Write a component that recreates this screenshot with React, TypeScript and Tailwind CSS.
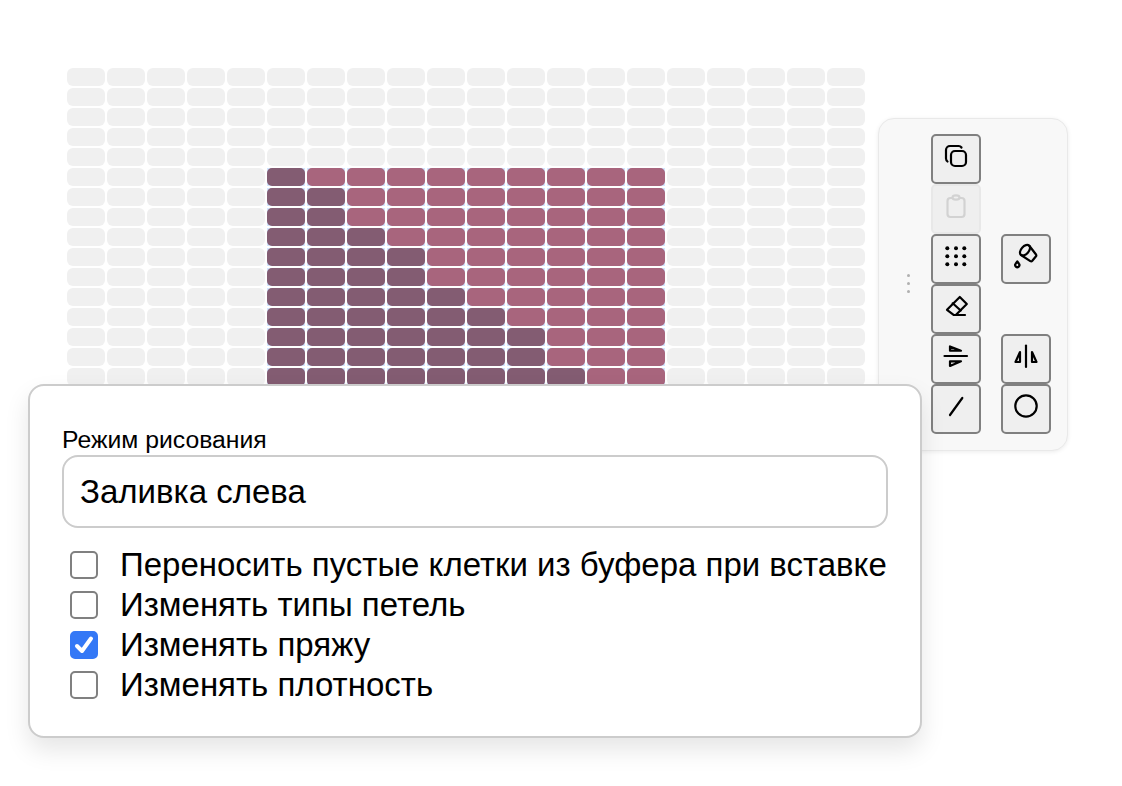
import { type ReactNode } from "react";

const COLS = 20;
const ROWS = 20;
// how many dark cells each row of the selection starts with
const DARK_COUNTS = [1, 2, 2, 3, 4, 4, 5, 6, 7, 7, 8, 8, 9, 10, 10];
const SEL_LEFT = 5;
const SEL_RIGHT = 14;
const SEL_TOP = 5;

function Cell({ col, row }: { col: number; row: number }) {
	const selected = col >= SEL_LEFT && col <= SEL_RIGHT && row >= SEL_TOP;
	if (!selected) {
		return <div className="h-[18px] w-[38px] rounded-[6px] bg-[#f0f0f0]" />;
	}
	const dark = col - SEL_LEFT < (DARK_COUNTS[row - SEL_TOP] ?? 10);
	return (
		<div className="h-[18px] w-[38px] bg-[#d3e6ff]">
			<div
				className={`h-full w-full rounded-[5px] ${dark ? "bg-[#835c72]" : "bg-[#a8657d]"}`}
			/>
		</div>
	);
}

function ToolButton({
	children,
	disabled,
}: {
	children: ReactNode;
	disabled?: boolean;
}) {
	return (
		<button
			type="button"
			disabled={disabled}
			className={`flex h-[50px] w-[50px] items-center justify-center rounded-[5px] border-2 bg-[#efefef] ${
				disabled ? "border-[#e8e8e8] text-[#d2d2d2]" : "border-[#808080] text-black"
			}`}
		>
			{children}
		</button>
	);
}

function Icon({ children }: { children: ReactNode }) {
	return (
		<svg
			viewBox="2 2 46 46"
			className="h-[46px] w-[46px]"
			fill="none"
			stroke="currentColor"
			strokeWidth="2.2"
			strokeLinecap="round"
			strokeLinejoin="round"
		>
			{children}
		</svg>
	);
}

function CheckRow({ label, checked }: { label: string; checked?: boolean }) {
	return (
		<label className="flex h-10 items-center">
			<span
				className={`ml-2 flex h-[28px] w-[28px] shrink-0 items-center justify-center rounded-[5px] border-2 ${
					checked ? "border-[#3478f6] bg-[#3478f6]" : "border-[#808080] bg-white"
				}`}
			>
				{checked && (
					<svg viewBox="0 0 24 24" className="h-[24px] w-[24px]" fill="none">
						<path
							d="M5 13l5 5L19 5.5"
							stroke="white"
							strokeWidth="4"
							strokeLinecap="round"
							strokeLinejoin="round"
						/>
					</svg>
				)}
			</span>
			<span className="ml-[22px] whitespace-nowrap text-[33px] leading-10 text-black">
				{label}
			</span>
		</label>
	);
}

export default function App() {
	return (
		<div className="relative h-[786px] w-[1122px] overflow-hidden bg-white pl-[67px] pt-[68px] font-['Liberation_Sans',Arial,sans-serif]">
			<div className="grid w-max grid-cols-[repeat(20,38px)] gap-[2px]">
				{Array.from({ length: ROWS * COLS }, (_, i) => (
					<Cell key={i} col={i % COLS} row={Math.floor(i / COLS)} />
				))}
			</div>

			{/* floating tool palette */}
			<div className="absolute left-[878px] top-[118px] flex rounded-[16px] border border-[#e9e9e9] bg-[#f8f8f8] pb-4 pl-[27px] pr-4 pt-[15px] shadow-[0_1px_4px_rgba(0,0,0,0.08)]">
				<div className="mr-[21px] flex w-[4px] flex-col items-center justify-center gap-[5px] pb-[2px]">
					<span className="h-[3px] w-[3px] rounded-full bg-[#b0b0b0]" />
					<span className="h-[3px] w-[3px] rounded-full bg-[#b0b0b0]" />
					<span className="h-[3px] w-[3px] rounded-full bg-[#b0b0b0]" />
				</div>
				<div className="grid grid-cols-[50px_50px] gap-x-[20px]">
					<ToolButton>
						<Icon>
							<rect x="20" y="17" width="15" height="15" rx="4" />
							<path d="M30.5 13.5a3.5 3.5 0 0 0-3-1.5H19a4 4 0 0 0-4 4v8.5a4 4 0 0 0 1.5 3" />
						</Icon>
					</ToolButton>
					<div />
					<ToolButton disabled>
						<Icon>
							<rect x="16.5" y="14" width="17" height="19" rx="3" />
							<ellipse cx="25" cy="13.5" rx="3.5" ry="2.2" fill="#efefef" />
						</Icon>
					</ToolButton>
					<div />
					<ToolButton>
						<Icon>
							<g fill="currentColor" stroke="none">
								<circle cx="16.3" cy="14.3" r="2" />
								<circle cx="25" cy="14.3" r="2" />
								<circle cx="33.3" cy="14.3" r="2" />
								<circle cx="16.3" cy="22.3" r="2" />
								<circle cx="25" cy="22.3" r="2" />
								<circle cx="33.3" cy="22.3" r="2" />
								<circle cx="16.3" cy="30.3" r="2" />
								<circle cx="25" cy="30.3" r="2" />
								<circle cx="33.3" cy="30.3" r="2" />
							</g>
						</Icon>
					</ToolButton>
					<ToolButton>
						<Icon>
							<ellipse cx="24" cy="16.2" rx="6.2" ry="3.8" transform="rotate(-48 24 16.2)" />
							<path d="M28.5 12l6.5 8.5a1.6 1.6 0 0 1-.2 2l-3.5 4.3a1.6 1.6 0 0 1-2 .3L20 21" />
							<path d="M16.3 27.3l-1.6 2.4a2.1 2.1 0 1 0 3.2 0z" />
						</Icon>
					</ToolButton>
					<ToolButton>
						<Icon>
							<path d="M16 25.8L28.8 13l7 7-11 11-2.2-.2z" />
							<path d="M21.7 19.3l8 7.2" />
							<path d="M24 31h10" />
						</Icon>
					</ToolButton>
					<div />
					<ToolButton>
						<Icon>
							<path d="M13.5 22h22.5" />
							<path d="M19 12.5v4.2h11z" />
							<path d="M19 27.3v4.7l11-4.7z" />
						</Icon>
					</ToolButton>
					<ToolButton>
						<Icon>
							<path d="M25 11.5v21.5" />
							<path d="M19 18l-4.5 10H19z" />
							<path d="M31 18l4.5 10H31z" />
						</Icon>
					</ToolButton>
					<ToolButton>
						<Icon>
							<path d="M19 31l12.3-17" />
						</Icon>
					</ToolButton>
					<ToolButton>
						<Icon>
							<circle cx="25" cy="22" r="10.7" />
						</Icon>
					</ToolButton>
				</div>
			</div>

			{/* drawing options panel */}
			<div className="absolute left-[28px] top-[384px] h-[354px] w-[894px] rounded-[16px] border-2 border-[#cccccc] bg-white pl-[32px] pt-[40px] shadow-[0_12px_24px_rgba(0,0,0,0.1)]">
				<div className="text-[24.75px] leading-[28px] text-black">Режим рисования</div>
				<div className="mt-[1px] flex h-[73px] w-[826px] items-center rounded-[16px] border-2 border-[#cccccc] pl-[16px] text-[33px] text-black">
					Заливка слева
				</div>
				<div className="mt-[17px] flex flex-col">
					<CheckRow label="Переносить пустые клетки из буфера при вставке" />
					<CheckRow label="Изменять типы петель" />
					<CheckRow label="Изменять пряжу" checked />
					<CheckRow label="Изменять плотность" />
				</div>
			</div>
		</div>
	);
}
